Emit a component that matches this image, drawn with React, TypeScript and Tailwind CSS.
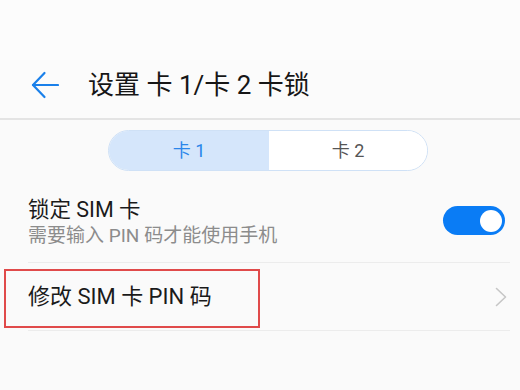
import React from "react";

export default function App() {
  const font = { fontFamily: 'Roboto, "Noto Sans CJK SC", sans-serif' };
  return (
    <div className="w-[520px] h-[390px] bg-[#fafafa] overflow-hidden flex flex-col" style={font}>
      <div className="h-[60px] bg-[#fcfcfc]" />
      <div className="h-[58px] pb-[8px] flex items-center bg-[#fbfbfb]">
        <svg className="ml-[31px]" width="28" height="28" viewBox="0 0 28 28" fill="none">
          <path d="M2 14H27" stroke="#1a80ea" strokeWidth="2.2" strokeLinecap="round" />
          <path d="M13.5 2L2 14L13.5 26" stroke="#1a80ea" strokeWidth="2.2" strokeLinecap="round" strokeLinejoin="round" />
        </svg>
        <div className="ml-[29px] text-[26px] leading-[32px] text-[#161616] whitespace-pre">设置 卡 1/卡 2 卡锁</div>
      </div>
      <div className="h-[2px] bg-[#e4e4e4]" />
      <div className="mt-[10px] ml-[108px] w-[320px] h-[41px] flex rounded-full border border-[#cfe1f6] overflow-hidden">
        <div className="w-[160px] h-full bg-[#d5e6fb] flex items-center justify-center text-[18px] text-[#2a86ea] whitespace-pre">卡 1</div>
        <div className="flex-1 h-full bg-white flex items-center justify-center text-[18px] text-[#555555] whitespace-pre">卡 2</div>
      </div>
      <div className="ml-[28px] mr-[10px] h-[92px] flex items-start border-b border-[#ececec]">
        <div className="flex-1 pt-[25px] flex flex-col">
          <div className="text-[21.5px] leading-[28px] text-[#1a1a1a] whitespace-pre">锁定 SIM 卡</div>
          <div className="text-[19px] leading-[24px] text-[#8c8c8c] whitespace-pre">需要输入 PIN 码才能使用手机</div>
        </div>
        <div className="mt-[35px] mr-[5px] w-[62px] h-[29px] rounded-full bg-[#0a7cf5] flex items-center justify-end pr-[3px]">
          <div className="w-[22px] h-[22px] rounded-full bg-white" />
        </div>
      </div>
      <div className="relative">
        <div className="ml-[28px] mr-[10px] h-[68px] flex items-center border-b border-[#ececec]">
          <div className="flex-1 text-[22px] leading-[30px] text-[#1a1a1a] whitespace-pre">修改 SIM 卡 PIN 码</div>
          <svg className="mr-[3px]" width="12" height="20" viewBox="0 0 12 20" fill="none">
            <path d="M1.5 1.5L10.5 10L1.5 18.5" stroke="#c6c6c6" strokeWidth="1.6" strokeLinecap="round" strokeLinejoin="round" />
          </svg>
        </div>
        <div className="absolute left-[4px] top-[6px] w-[256px] h-[59px] border-2 border-[#e04a4a]" />
      </div>
    </div>
  );
}
